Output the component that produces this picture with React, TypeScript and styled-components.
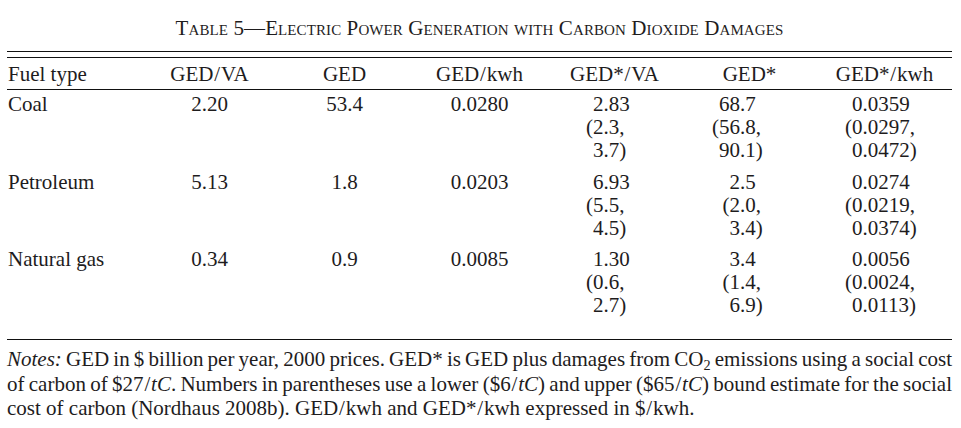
import styled, { createGlobalStyle } from 'styled-components';

const GlobalStyle = createGlobalStyle`
  body {
    margin: 0;
    background: #fff;
    color: #1e1c1d;
    font-family: "Liberation Serif", "Times New Roman", serif;
  }
`;

type Triple = [string, string, string];

interface FuelRow {
  fuel: string;
  va: string;
  ged: string;
  kwh: string;
  vaStar: Triple;
  gedStar: Triple;
  kwhStar: Triple;
}

const rows: FuelRow[] = [
  {
    fuel: 'Coal',
    va: '2.20',
    ged: '53.4',
    kwh: '0.0280',
    vaStar: ['2.83', '(2.3,', '3.7)'],
    gedStar: ['68.7', '(56.8,', '90.1)'],
    kwhStar: ['0.0359', '(0.0297,', '0.0472)'],
  },
  {
    fuel: 'Petroleum',
    va: '5.13',
    ged: '1.8',
    kwh: '0.0203',
    vaStar: ['6.93', '(5.5,', '4.5)'],
    gedStar: ['2.5', '(2.0,', '3.4)'],
    kwhStar: ['0.0274', '(0.0219,', '0.0374)'],
  },
  {
    fuel: 'Natural gas',
    va: '0.34',
    ged: '0.9',
    kwh: '0.0085',
    vaStar: ['1.30', '(0.6,', '2.7)'],
    gedStar: ['3.4', '(1.4,', '6.9)'],
    kwhStar: ['0.0056', '(0.0024,', '0.0113)'],
  },
];

// decimal point offset (px from column left) for the starred columns
const POINTS = { vaStar: 55.5, gedStar: 57, kwhStar: 44.5 };

const Slash = () => <SlashMark>/</SlashMark>;

const DecimalCell = ({ lines, point }: { lines: Triple; point: number }) => (
  <Cell $align="left">
    {lines.map((line, idx) => {
      const dot = line.indexOf('.');
      return (
        <DecLine key={idx}>
          <IntPart $w={point}>{line.slice(0, dot)}</IntPart>
          {line.slice(dot)}
        </DecLine>
      );
    })}
  </Cell>
);

export default function App() {
  return (
    <Page>
      <GlobalStyle />
      <Title>Table 5—Electric Power Generation with Carbon Dioxide Damages</Title>

      <Table>
        <DoubleRule />
        <HeaderRow>
          <Cell $align="left">Fuel type</Cell>
          <Cell>
            GED<Slash />VA
          </Cell>
          <Cell>GED</Cell>
          <Cell>
            GED<Slash />kwh
          </Cell>
          <Cell>
            GED*<Slash />VA
          </Cell>
          <Cell>GED*</Cell>
          <Cell>
            GED*<Slash />kwh
          </Cell>
        </HeaderRow>

        <Body>
          {rows.map((r) => (
            <DataRow key={r.fuel}>
              <Cell $align="left">{r.fuel}</Cell>
              <Cell>{r.va}</Cell>
              <Cell>{r.ged}</Cell>
              <Cell>{r.kwh}</Cell>
              <DecimalCell lines={r.vaStar} point={POINTS.vaStar} />
              <DecimalCell lines={r.gedStar} point={POINTS.gedStar} />
              <DecimalCell lines={r.kwhStar} point={POINTS.kwhStar} />
            </DataRow>
          ))}
        </Body>
      </Table>

      <Notes>
        <NoteLine>
          <em>Notes:</em> GED in $ billion per year, 2000 prices. GED* is GED plus damages from CO
          <Sub>2</Sub> emissions using a social cost
        </NoteLine>
        <NoteLine>
          of carbon of $27<Slash />
          <em>tC</em>. Numbers in parentheses use a lower ($6<Slash />
          <em>tC</em>) and upper ($65<Slash />
          <em>tC</em>) bound estimate for the social
        </NoteLine>
        <NoteLine $last>
          cost of carbon (Nordhaus 2008b). GED<Slash />kwh and GED*<Slash />kwh expressed in $<Slash />
          kwh.
        </NoteLine>
      </Notes>
    </Page>
  );
}

const Page = styled.div`
  width: 945px;
  margin-left: 7px;
`;

const Title = styled.div`
  padding-top: 17.5px;
  font-size: 21px;
  line-height: 21px;
  letter-spacing: 0.1px;
  font-variant: small-caps;
  text-align: center;
`;

const Table = styled.div`
  margin-top: 12.5px;
  font-size: 21px;
  line-height: 23px;
`;

const DoubleRule = styled.div`
  height: 5px;
  border-top: 1px solid #111;
  border-bottom: 1px solid #111;
`;

const Grid = styled.div`
  display: grid;
  grid-template-columns: repeat(7, 135px);
`;

const HeaderRow = styled(Grid)`
  padding: 4.5px 0 3.5px;
  border-bottom: 1px solid #111;
`;

const Body = styled.div`
  padding-bottom: 16.5px;
  border-bottom: 1px solid #111;
`;

const DataRow = styled(Grid)`
  padding: 3px 0 5.5px;
`;

const Cell = styled.div<{ $align?: 'left' | 'center' }>`
  text-align: ${(p) => p.$align ?? 'center'};
  padding-left: ${(p) => (p.$align === 'left' ? '1px' : '0')};
  white-space: nowrap;
`;

const DecLine = styled.div`
  white-space: pre;
`;

const IntPart = styled.span<{ $w: number }>`
  display: inline-block;
  width: ${(p) => p.$w}px;
  text-align: right;
`;

const SlashMark = styled.span`
  margin: 0 0.04em;
`;

const Notes = styled.div`
  margin-top: 7px;
  font-size: 21px;
  line-height: 24.5px;
`;

const NoteLine = styled.span<{ $last?: boolean }>`
  display: block;
  white-space: nowrap;
  text-align: justify;
  text-align-last: ${(p) => (p.$last ? 'left' : 'justify')};
  word-spacing: ${(p) => (p.$last ? '0' : '-3px')};
`;

const Sub = styled.sub`
  font-size: 0.68em;
  line-height: 0;
  vertical-align: -0.28em;
`;
